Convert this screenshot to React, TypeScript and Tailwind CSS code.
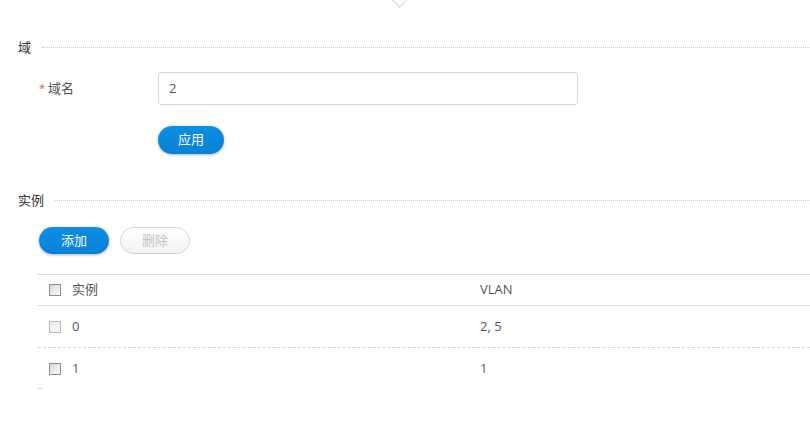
const font = { fontFamily: '"Open Sans", "Noto Sans CJK SC", sans-serif' };

function SectionTitle({ title }: { title: string }) {
  return (
    <div className="flex items-center h-5 pl-[18px]">
      <span className="text-[13px] text-[#333] leading-5">{title}</span>
      <div className="flex-1 ml-[11px] border-t border-dotted border-[#cfcfcf]" />
    </div>
  );
}

function Checkbox({ light }: { light?: boolean }) {
  return (
    <span
      className={
        "inline-block w-[12px] h-[12px] border bg-gradient-to-br from-[#d8d8d8] to-[#fbfbfb] " +
        (light ? "border-[#b8b8b8] from-[#ececec]" : "border-[#8e8e8e]")
      }
    />
  );
}

const rows = [
  { id: "0", vlan: "2, 5", light: true },
  { id: "1", vlan: "1", light: false },
];

export default function App() {
  return (
    <div className="relative w-[810px] h-[434px] bg-white overflow-hidden" style={font}>
      {/* caret at top */}
      <div className="absolute left-[393px] -top-[8px] w-[13px] h-[13px] rotate-45 border-r border-b border-[#d6d6d6] bg-white" />

      <div className="pt-[37px]">
        <SectionTitle title="域" />

        <div className="flex items-center mt-[15px] pl-[39px]">
          <div className="w-[119px] text-[13px] text-[#555] flex items-center">
            <span className="text-[#e0533e] text-[11px] mr-[3px]">*</span>
            <span>域名</span>
          </div>
          <div className="w-[420px] h-[33px] border border-[#d6d6d6] rounded-[3px] flex items-center pl-[10px] text-[13px] text-[#555]">
            2
          </div>
        </div>

        <div className="pl-[158px] mt-[21px]">
          <button className="w-[66px] h-[28px] rounded-full bg-gradient-to-b from-[#0d8fe3] to-[#0681d6] text-white text-[13px] shadow-[0_1px_3px_rgba(0,0,0,0.3)]">
            应用
          </button>
        </div>

        <div className="mt-[36px]">
          <SectionTitle title="实例" />
        </div>

        <div className="flex gap-[11px] pl-[39px] mt-[17px]">
          <button className="w-[70px] h-[27px] rounded-full bg-gradient-to-b from-[#0d8fe3] to-[#0681d6] text-white text-[13px] shadow-[0_1px_3px_rgba(0,0,0,0.3)]">
            添加
          </button>
          <button className="w-[70px] h-[27px] rounded-full bg-gradient-to-b from-white to-[#f2f2f2] border border-[#d4d4d4] text-[#c4c4c4] text-[13px]">
            删除
          </button>
        </div>

        <div className="ml-[38px] mt-[20px] text-[13px]">
          <div className="flex items-center h-[32px] border-t border-b border-[#d9d9d9] text-[#555]">
            <div className="w-[442px] flex items-center pl-[11px]">
              <Checkbox />
              <span className="ml-[11px]">实例</span>
            </div>
            <div>VLAN</div>
          </div>
          {rows.map((r, i) => (
            <div
              key={r.id}
              className={
                "flex items-center h-[42px] text-[#4f5a68] " +
                (i === 0 ? "border-b border-dashed border-[#d4d4d4]" : "")
              }
            >
              <div className="w-[442px] flex items-center pl-[11px]">
                <Checkbox light={r.light} />
                <span className="ml-[11px]">{r.id}</span>
              </div>
              <div>{r.vlan}</div>
            </div>
          ))}
          <div className="w-[4px] border-t border-[#d4d4d4] -mt-[2px]" />
        </div>
      </div>
    </div>
  );
}
